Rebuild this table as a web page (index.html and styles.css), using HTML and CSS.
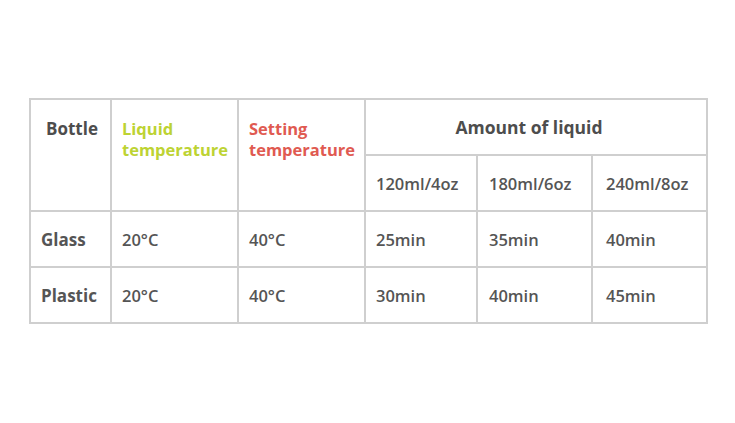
FILE: index.html
```html
<!DOCTYPE html>
<html>
<head>
<meta charset="utf-8">
<link rel="stylesheet" href="styles.css">
</head>
<body>
<div class="page">
  <div class="grid">
    <div class="cell head span2 c1 top">Bottle</div>
    <div class="cell head span2 green top">Liquid<br>temperature</div>
    <div class="cell head span2 red top">Setting<br>temperature</div>
    <div class="cell head span3 amount">Amount of liquid</div>
    <div class="cell sub p4">120ml/4oz</div>
    <div class="cell sub p5">180ml/6oz</div>
    <div class="cell sub p6">240ml/8oz</div>

    <div class="cell name">Glass</div>
    <div class="cell data">20°C</div>
    <div class="cell data">40°C</div>
    <div class="cell data p4">25min</div>
    <div class="cell data p5">35min</div>
    <div class="cell data p6">40min</div>

    <div class="cell name">Plastic</div>
    <div class="cell data">20°C</div>
    <div class="cell data">40°C</div>
    <div class="cell data p4">30min</div>
    <div class="cell data p5">40min</div>
    <div class="cell data p6">45min</div>
  </div>
</div>
</body>
</html>
```

FILE: styles.css
```css
html, body {
  margin: 0;
  padding: 0;
  background: #ffffff;
}
.page {
  padding-top: 98px;
  padding-left: 29px;
  font-family: "Open Sans", "Lato", sans-serif;
}
.grid {
  display: inline-grid;
  grid-template-columns: 79px 125px 125px 110px 113px 113px;
  grid-template-rows: 54px 54px 54px 54px;
  gap: 2px;
  padding: 2px;
  background: #cfcfcf;
}
.cell {
  background: #ffffff;
  display: flex;
  align-items: center;
  padding-left: 10px;
  color: #555555;
  font-size: 16.5px;
  font-weight: 600;
  box-sizing: border-box;
}
.head {
  font-weight: 700;
  color: #4d4d4d;
  line-height: 21px;
}
.span2 {
  grid-row: span 2;
}
.top {
  align-items: flex-start;
  padding-top: 18px;
}
.c1 {
  padding-left: 15px;
  font-size: 17px;
}
.green {
  color: #bdd333;
}
.red {
  color: #e05a51;
}
.span3 {
  grid-column: span 3;
}
.amount {
  justify-content: center;
  padding-left: 0;
  padding-right: 14px;
  font-size: 17.5px;
}
.sub {
  font-weight: 600;
}
.name {
  font-weight: 700;
  font-size: 17px;
}
.p4 { padding-left: 10px; }
.p5 { padding-left: 11px; }
.p6 { padding-left: 13px; }
```
